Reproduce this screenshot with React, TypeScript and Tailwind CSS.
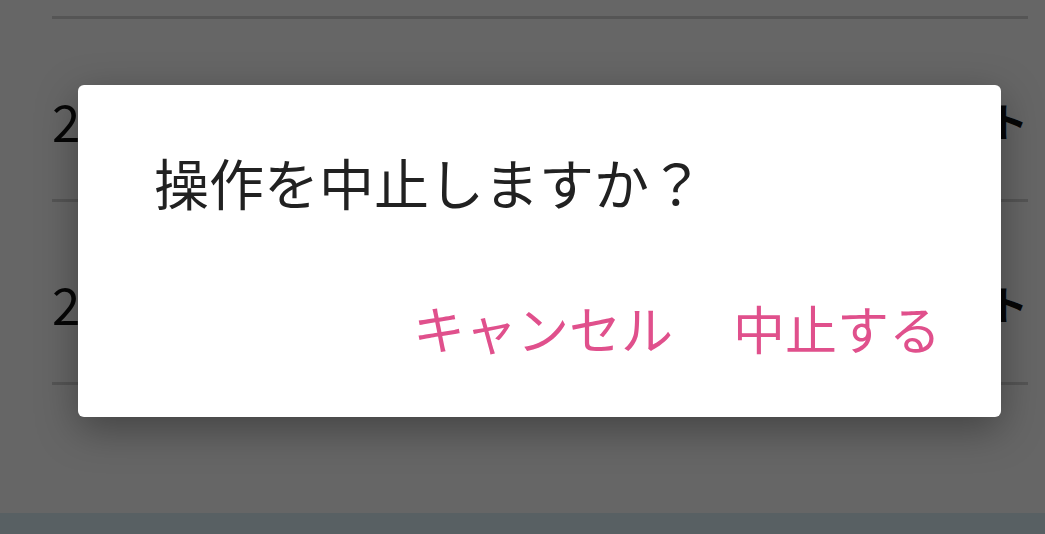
import React from "react";

const font = { fontFamily: '"Noto Sans CJK JP", "Noto Sans", sans-serif' };

function Row({ left, right }: { left: string; right: string }) {
  return (
    <div className="flex h-[183px] items-center justify-between border-b-[3px] border-[#d4d4d4] pt-[22px]">
      <span className="text-[51px] leading-none text-[#111]">{left}</span>
      <span className="text-[40px] leading-none font-bold text-[#111]">{right}</span>
    </div>
  );
}

export default function App() {
  return (
    <div className="relative h-[534px] w-[1045px] overflow-hidden bg-white" style={font}>
      {/* page underneath */}
      <div className="flex h-full flex-col">
        <div className="ml-[52px] mr-[17px] flex-1">
          <div className="h-[19px] border-b-[3px] border-[#d4d4d4]" />
          <Row left="21:00" right="リスト" />
          <Row left="22:00" right="リスト" />
        </div>
        <div className="h-[21px] bg-[#dcf0f7]" />
      </div>

      {/* overlay */}
      <div className="absolute inset-0 bg-black/60" />

      {/* dialog */}
      <div className="absolute left-[78px] top-[85px] flex h-[332px] w-[923px] flex-col rounded-[6px] bg-white shadow-[0_12px_40px_rgba(0,0,0,0.35)]">
        <h2 className="pl-[76px] pt-[69px] text-[55px] leading-none text-[#212121]">
          操作を中止しますか？
        </h2>
        <div className="mt-auto flex justify-end gap-[60px] pb-[63px] pr-[60px]">
          <button className="text-[52px] leading-none text-[#e0508c]">キャンセル</button>
          <button className="text-[52px] leading-none text-[#e0508c]">中止する</button>
        </div>
      </div>
    </div>
  );
}
